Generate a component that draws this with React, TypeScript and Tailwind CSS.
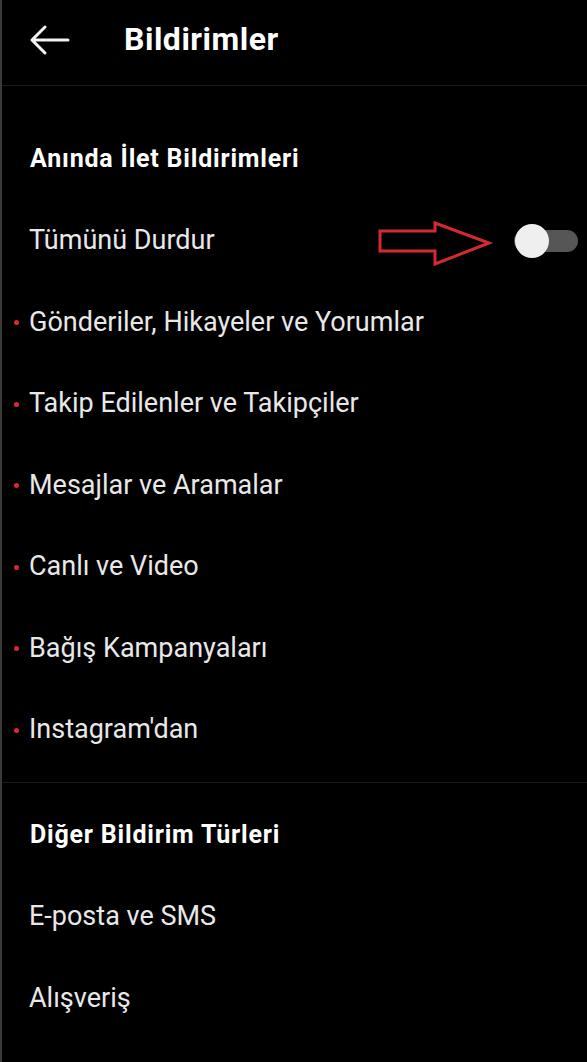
import React from "react";

const push = [
  "Gönderiler, Hikayeler ve Yorumlar",
  "Takip Edilenler ve Takipçiler",
  "Mesajlar ve Aramalar",
  "Canlı ve Video",
  "Bağış Kampanyaları",
  "Instagram'dan",
];

function Row({ label, dot }: { label: string; dot?: boolean }) {
  return (
    <div className="relative flex items-center h-[81.5px] pl-[27px] text-[27px] text-[#e8e8e8]">
      {dot && <span className="absolute left-[12px] top-[39px] w-[5px] h-[5px] rounded-full bg-[#e0243a]" />}
      {label}
    </div>
  );
}

function Heading({ label }: { label: string }) {
  return (
    <div className="flex items-center h-[81.5px] pl-[28px] text-[25px] font-bold text-white tracking-[0.8px]">{label}</div>
  );
}

export default function App() {
  return (
    <div className="min-h-[1062px] w-[587px] bg-black border-l-2 border-[#3a3a3a] overflow-hidden" style={{ fontFamily: "Roboto, 'Noto Sans', sans-serif" }}>
      <div className="flex items-center h-[86px] border-b border-[#1c1c1c]">
        <svg className="ml-[27px] mt-[-6px]" width="42" height="32" viewBox="0 0 42 32" fill="none" stroke="#f2f2f2" strokeWidth="3" strokeLinecap="round" strokeLinejoin="round">
          <path d="M39 16H3M16 3L3 16l13 13" />
        </svg>
        <div className="ml-[53px] mt-[-8px] text-[32px] font-bold text-white tracking-[0.5px]">Bildirimler</div>
      </div>
      <div className="h-[32px]" />
      <Heading label="Anında İlet Bildirimleri" />
      <div className="relative flex items-center h-[81.5px] pl-[27px] text-[27px] text-[#e8e8e8]">
        Tümünü Durdur
        <svg className="absolute left-[376px] top-[20px]" width="116" height="48" viewBox="0 0 116 48" fill="none" stroke="#d42a2f" strokeWidth="3" strokeLinejoin="miter">
          <path d="M2 11H57V3L111 23L57 44V31H2Z" />
        </svg>
        <div className="absolute left-[512px] top-[30px] w-[64px] h-[22px] rounded-full bg-[#565656]" />
        <div className="absolute left-[513px] top-[24px] w-[34px] h-[34px] rounded-full bg-[#efefef]" />
      </div>
      {push.map((p) => (
        <Row key={p} label={p} dot />
      ))}
      <div className="h-[13px] border-b border-[#1c1c1c]" />
      <div className="h-[11px]" />
      <Heading label="Diğer Bildirim Türleri" />
      <Row label="E-posta ve SMS" />
      <Row label="Alışveriş" />
    </div>
  );
}
